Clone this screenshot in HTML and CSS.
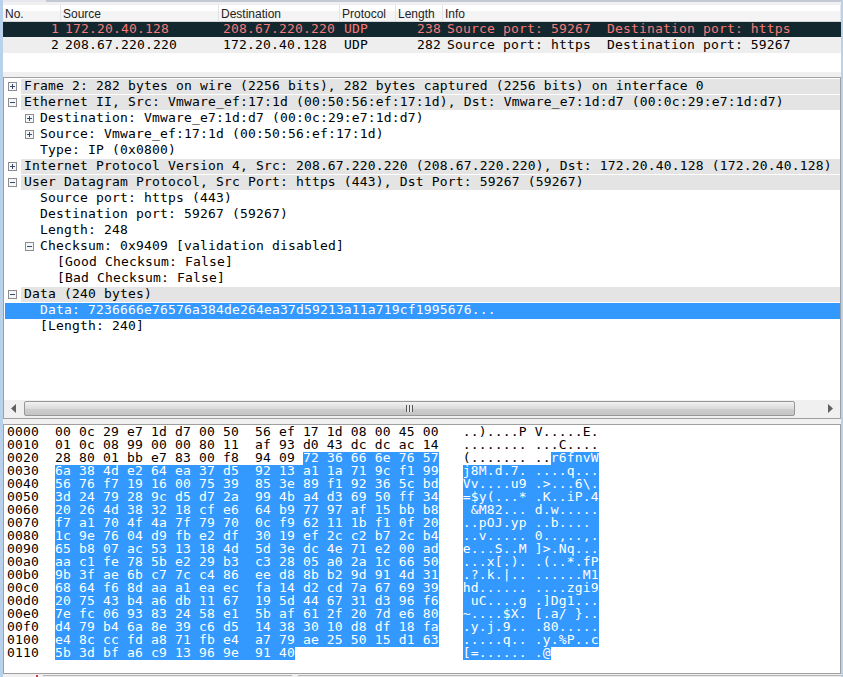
FILE: index.html
```html
<!DOCTYPE html>
<html lang="en">
<head>
<meta charset="utf-8">
<title>Wireshark</title>
<link rel="stylesheet" href="styles.css">
</head>
<body>
<div class="window">
  <div class="topline"></div>
  <section class="list">
    <div class="head">
      <div class="hc c-no">No.</div>
      <div class="hc c-src">Source</div>
      <div class="hc c-dst">Destination</div>
      <div class="hc c-pro">Protocol</div>
      <div class="hc c-len">Length</div>
      <div class="hc c-info">Info</div>
    </div>
    <div class="row row-dark">
      <div class="c c-no num">1</div>
      <div class="c c-src">172.20.40.128</div>
      <div class="c c-dst">208.67.220.220</div>
      <div class="c c-pro">UDP</div>
      <div class="c c-len num">238</div>
      <div class="c c-info">Source port: 59267  Destination port: https</div>
    </div>
    <div class="row row-light">
      <div class="c c-no num">2</div>
      <div class="c c-src">208.67.220.220</div>
      <div class="c c-dst">172.20.40.128</div>
      <div class="c c-pro">UDP</div>
      <div class="c c-len num">282</div>
      <div class="c c-info">Source port: https  Destination port: 59267</div>
    </div>
  </section>
  <div class="split"></div>
  <section class="tree">
    <div class="t top"><svg class="ex" viewBox="0 0 9 9"><rect x=".5" y=".5" width="8" height="8"/><path d="M2 4.500h5M4.500 2v5"/></svg><span class="tx">Frame 2: 282 bytes on wire (2256 bits), 282 bytes captured (2256 bits) on interface 0</span></div>
    <div class="t top"><svg class="ex" viewBox="0 0 9 9"><rect x=".5" y=".5" width="8" height="8"/><path d="M2 4.500h5"/></svg><span class="tx">Ethernet II, Src: Vmware_ef:17:1d (00:50:56:ef:17:1d), Dst: Vmware_e7:1d:d7 (00:0c:29:e7:1d:d7)</span></div>
    <div class="t l1"><svg class="ex" viewBox="0 0 9 9"><rect x=".5" y=".5" width="8" height="8"/><path d="M2 4.500h5M4.500 2v5"/></svg><span class="tx">Destination: Vmware_e7:1d:d7 (00:0c:29:e7:1d:d7)</span></div>
    <div class="t l1"><svg class="ex" viewBox="0 0 9 9"><rect x=".5" y=".5" width="8" height="8"/><path d="M2 4.500h5M4.500 2v5"/></svg><span class="tx">Source: Vmware_ef:17:1d (00:50:56:ef:17:1d)</span></div>
    <div class="t leaf"><span class="tx">Type: IP (0x0800)</span></div>
    <div class="t top"><svg class="ex" viewBox="0 0 9 9"><rect x=".5" y=".5" width="8" height="8"/><path d="M2 4.500h5M4.500 2v5"/></svg><span class="tx">Internet Protocol Version 4, Src: 208.67.220.220 (208.67.220.220), Dst: 172.20.40.128 (172.20.40.128)</span></div>
    <div class="t top"><svg class="ex" viewBox="0 0 9 9"><rect x=".5" y=".5" width="8" height="8"/><path d="M2 4.500h5"/></svg><span class="tx">User Datagram Protocol, Src Port: https (443), Dst Port: 59267 (59267)</span></div>
    <div class="t leaf"><span class="tx">Source port: https (443)</span></div>
    <div class="t leaf"><span class="tx">Destination port: 59267 (59267)</span></div>
    <div class="t leaf"><span class="tx">Length: 248</span></div>
    <div class="t l1"><svg class="ex" viewBox="0 0 9 9"><rect x=".5" y=".5" width="8" height="8"/><path d="M2 4.500h5"/></svg><span class="tx">Checksum: 0x9409 [validation disabled]</span></div>
    <div class="t l2"><span class="tx">[Good Checksum: False]</span></div>
    <div class="t l2"><span class="tx">[Bad Checksum: False]</span></div>
    <div class="t top"><svg class="ex" viewBox="0 0 9 9"><rect x=".5" y=".5" width="8" height="8"/><path d="M2 4.500h5"/></svg><span class="tx">Data (240 bytes)</span></div>
    <div class="t leaf sel"><span class="tx">Data: 7236666e76576a384de264ea37d59213a11a719cf1995676...</span></div>
    <div class="t leaf"><span class="tx">[Length: 240]</span></div>
    <div class="tree-fill"></div>
    <div class="hscroll">
      <svg class="arrow" viewBox="0 0 6 9"><path d="M5 0v9L0 4.500z"/></svg>
      <div class="track">
        <div class="thumb"><span class="grip"></span></div>
      </div>
      <svg class="arrow" viewBox="0 0 6 9"><path d="M1 0v9l5-4.500z"/></svg>
    </div>
  </section>
  <div class="split"></div>
  <section class="bytes">
    <div class="ln">0000  00 0c 29 e7 1d d7 00 50  56 ef 17 1d 08 00 45 00   ..)....P V.....E.</div>
    <div class="ln">0010  01 0c 08 99 00 00 80 11  af 93 d0 43 dc dc ac 14   ........ ...C....</div>
    <div class="ln">0020  28 80 01 bb e7 83 00 f8  94 09 <mark>72 36 66 6e 76 57</mark>   (....... ..<mark>r6fnvW</mark></div>
    <div class="ln">0030  <mark>6a 38 4d e2 64 ea 37 d5  92 13 a1 1a 71 9c f1 99</mark>   <mark>j8M.d.7. ....q...</mark></div>
    <div class="ln">0040  <mark>56 76 f7 19 16 00 75 39  85 3e 89 f1 92 36 5c bd</mark>   <mark>Vv....u9 .&gt;...6\.</mark></div>
    <div class="ln">0050  <mark>3d 24 79 28 9c d5 d7 2a  99 4b a4 d3 69 50 ff 34</mark>   <mark>=$y(...* .K..iP.4</mark></div>
    <div class="ln">0060  <mark>20 26 4d 38 32 18 cf e6  64 b9 77 97 af 15 bb b8</mark>   <mark> &amp;M82... d.w.....</mark></div>
    <div class="ln">0070  <mark>f7 a1 70 4f 4a 7f 79 70  0c f9 62 11 1b f1 0f 20</mark>   <mark>..pOJ.yp ..b.... </mark></div>
    <div class="ln">0080  <mark>1c 9e 76 04 d9 fb e2 df  30 19 ef 2c c2 b7 2c b4</mark>   <mark>..v..... 0..,..,.</mark></div>
    <div class="ln">0090  <mark>65 b8 07 ac 53 13 18 4d  5d 3e dc 4e 71 e2 00 ad</mark>   <mark>e...S..M ]&gt;.Nq...</mark></div>
    <div class="ln">00a0  <mark>aa c1 fe 78 5b e2 29 b3  c3 28 05 a0 2a 1c 66 50</mark>   <mark>...x[.). .(..*.fP</mark></div>
    <div class="ln">00b0  <mark>9b 3f ae 6b c7 7c c4 86  ee d8 8b b2 9d 91 4d 31</mark>   <mark>.?.k.|.. ......M1</mark></div>
    <div class="ln">00c0  <mark>68 64 f6 8d aa a1 ea ec  fa 14 d2 cd 7a 67 69 39</mark>   <mark>hd...... ....zgi9</mark></div>
    <div class="ln">00d0  <mark>20 75 43 b4 a6 db 11 67  19 5d 44 67 31 d3 96 f6</mark>   <mark> uC....g .]Dg1...</mark></div>
    <div class="ln">00e0  <mark>7e fc 06 93 83 24 58 e1  5b af 61 2f 20 7d e6 80</mark>   <mark>~....$X. [.a/ }..</mark></div>
    <div class="ln">00f0  <mark>d4 79 b4 6a 8e 39 c6 d5  14 38 30 10 d8 df 18 fa</mark>   <mark>.y.j.9.. .80.....</mark></div>
    <div class="ln">0100  <mark>e4 8c cc fd a8 71 fb e4  a7 79 ae 25 50 15 d1 63</mark>   <mark>.....q.. .y.%P..c</mark></div>
    <div class="ln">0110  <mark>5b 3d bf a6 c9 13 96 9e  91 40</mark>                     <mark>[=...... .@</mark></div>
  </section>
  <div class="status">
    <div class="st st-a"><span class="led"></span></div>
    <div class="st st-b"></div>
    <div class="st st-c"></div>
  </div>
</div>
</body>
</html>
```
FILE: styles.css
```css
html, body {
  margin: 0;
  padding: 0;
  height: 677px;
  overflow: hidden;
  background: #b9d1ea;
}
.window {
  width: 838px;
  height: 677px;
  margin-left: 3px;
  background: #f0f0f0;
  display: flex;
  flex-direction: column;
  overflow: hidden;
  font-family: "DejaVu Sans Mono", monospace;
  font-size: 13px;
  letter-spacing: 0.17px;
  color: #000;
}
.topline {
  height: 2px;
  background: linear-gradient(90deg, #e6e8ee 43px, #c5c9d6 43px);
  flex: none;
}
.list {
  flex: none;
  height: 67px;
  margin-top: 3px;
  background: #fff;
  display: flex;
  flex-direction: column;
}
.head {
  height: 17px;
  display: flex;
  flex: none;
  font-family: "Liberation Sans", sans-serif;
  font-size: 12px;
  letter-spacing: 0;
  color: #1e1e1e;
  background: linear-gradient(#ffffff 0 6px, #f4f4f4 6px);
  border-bottom: 1px solid #d5d5d5;
  box-sizing: border-box;
}
.hc {
  box-sizing: border-box;
  padding-left: 2px;
  line-height: 18px;
  border-right: 1px solid #e3e5e8;
  white-space: nowrap;
  overflow: hidden;
}
.row {
  display: flex;
  height: 16px;
  line-height: 14px;
  white-space: pre;
  flex: none;
}
.row-dark { background: #12272e; color: #f77a76; height: 15px; }
.row-light { background: #eeeeee; color: #000; line-height: 15px; }
.c { box-sizing: border-box; padding-left: 4px; overflow: hidden; }
.hc.c-no, .c.c-no { width: 58px; }
.c-src { width: 158px; }
.c-dst { width: 121px; }
.c-pro { width: 56px; }
.c-len { width: 47px; }
.c-info { flex: 1; }
.c.num { text-align: right; padding: 0 2px 0 0; }
.split { height: 5px; flex: none; }
.tree {
  flex: none;
  height: 342px;
  box-sizing: border-box;
  background: #fff;
  border: 1px solid #a0a0a0;
  display: flex;
  flex-direction: column;
  padding-top: 1px;
}
.t {
  height: 16px;
  line-height: 14px;
  display: flex;
  flex: none;
  align-items: flex-start;
  white-space: pre;
}
.ex {
  width: 9px;
  height: 9px;
  flex: none;
  margin-top: 3px;
  fill: #f4f6f8;
  stroke: #8c8c8c;
  stroke-width: 1;
  shape-rendering: crispEdges;
}
.ex path { stroke: #384a70; }
.top { padding-left: 4px; }
.top .tx { flex: 1; background: #e4e4e4; margin: 0 0 0 4px; padding-left: 3px; height: 15px; }
.l1 { padding-left: 21px; }
.l1 .tx { margin-left: 6px; }
.leaf { padding-left: 36px; }
.l2 { padding-left: 53px; }
.sel { background: #3399ff; color: #fff; margin-left: 1px; padding-left: 35px; }
.tree-fill { flex: 1; }
.hscroll {
  height: 18px;
  flex: none;
  display: flex;
  align-items: flex-start;
  background: #f0f0f0;
  box-sizing: border-box;
  padding-top: 1px;
}
.arrow { width: 6px; height: 9px; flex: none; margin: 3px 7px 0; fill: #606060; }
.track { flex: 1; display: flex; height: 15px; }
.thumb {
  width: 771px;
  box-sizing: border-box;
  border: 1px solid #979797;
  border-radius: 2px;
  background: linear-gradient(#f2f2f2, #dcdcdc 50%, #cfcfcf 51%, #c4c4c4);
  display: flex;
  align-items: center;
  justify-content: center;
}
.grip { width: 7px; height: 7px; background: repeating-linear-gradient(90deg, #555 0 1px, #e8e8e8 1px 3px); }
.bytes {
  flex: 1;
  min-height: 0;
  box-sizing: border-box;
  background: #fff;
  border: 1px solid #a0a0a0;
  padding: 1px 0 0 3px;
}
.ln {
  height: 13px;
  line-height: 12px;
  white-space: pre;
}
.ln mark {
  display: inline-block;
  height: 13px;
  line-height: 12px;
  background: #3399ff;
  color: #fff;
}
.status { height: 2px; display: flex; flex: none; margin-top: 1px; }
.st { border-top: 1px solid #b4b4b4; background: #ececec; box-sizing: border-box; }
.st-a { width: 40px; border: 0; background: #f0f0f0; display: flex; justify-content: flex-end; padding-right: 5px; }
.led { width: 2px; height: 2px; background: #e0383c; }
.st-b { width: 249px; margin-right: 6px; }
.st-c { flex: 1; }
```
